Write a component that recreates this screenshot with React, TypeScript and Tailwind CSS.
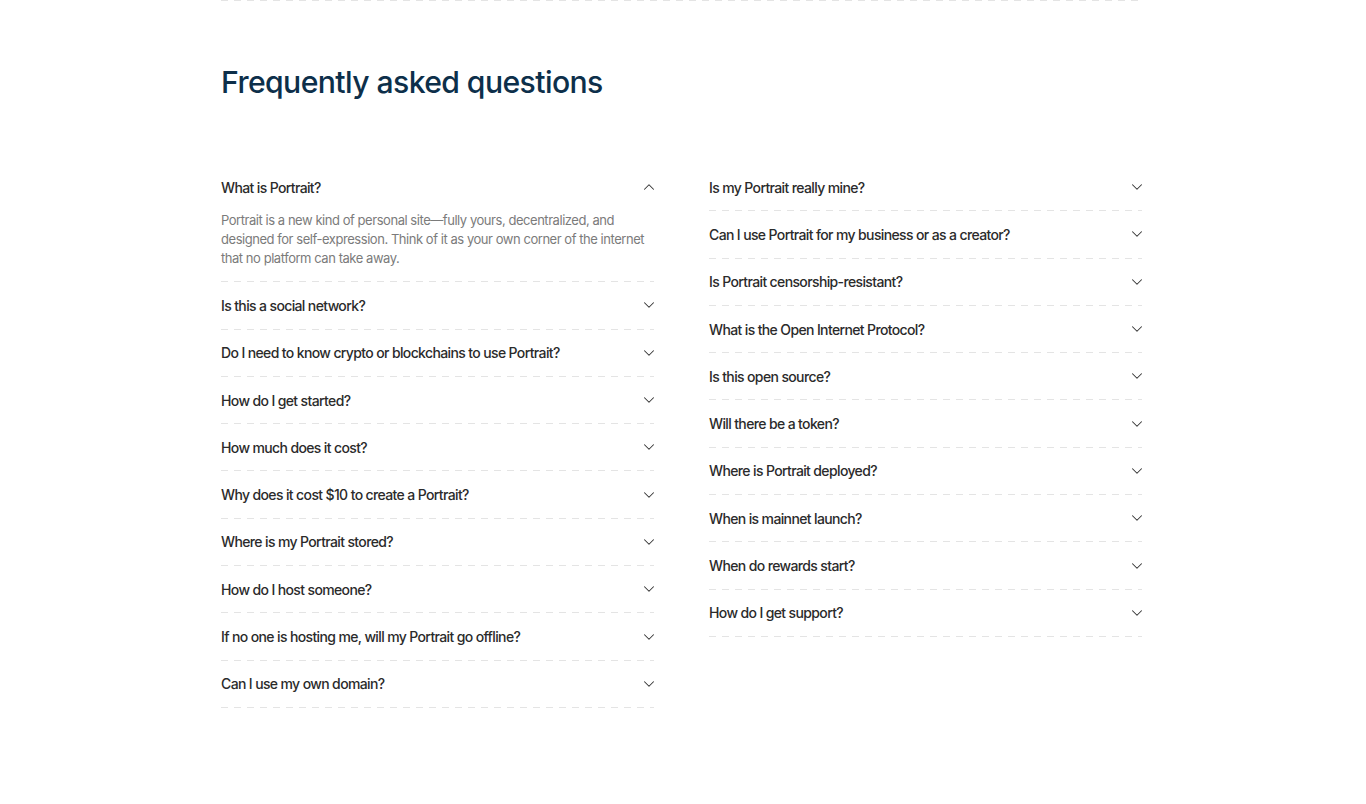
import { ChevronDown, ChevronUp } from "lucide-react";

const left = [
  "What is Portrait?",
  "Is this a social network?",
  "Do I need to know crypto or blockchains to use Portrait?",
  "How do I get started?",
  "How much does it cost?",
  "Why does it cost $10 to create a Portrait?",
  "Where is my Portrait stored?",
  "How do I host someone?",
  "If no one is hosting me, will my Portrait go offline?",
  "Can I use my own domain?",
];

const right = [
  "Is my Portrait really mine?",
  "Can I use Portrait for my business or as a creator?",
  "Is Portrait censorship-resistant?",
  "What is the Open Internet Protocol?",
  "Is this open source?",
  "Will there be a token?",
  "Where is Portrait deployed?",
  "When is mainnet launch?",
  "When do rewards start?",
  "How do I get support?",
];

function Dashes() {
  return <div className="h-px w-full bg-[repeating-linear-gradient(90deg,#e4e4e4_0_7px,transparent_7px_13px)]"></div>;
}

function Item({ q, open }: { q: string; open?: boolean }) {
  return (
    <div>
      <button className="flex h-[46.3px] w-full items-center justify-between text-left">
        <span className="text-[14px] font-medium tracking-[-0.045em] text-[#2b2b2b]">{q}</span>
        {open ? (
          <ChevronUp size={18} strokeWidth={1.4} className="mr-[-4px] text-[#333]" />
        ) : (
          <ChevronDown size={18} strokeWidth={1.4} className="mr-[-4px] text-[#333]" />
        )}
      </button>
      {open && (
        <p className="pt-[1px] pb-[13px] text-[13px] leading-[19px] tracking-[-0.035em] text-[#7b7b7b]">
          Portrait is a new kind of personal site—fully yours, decentralized, and designed for self-expression. Think of it as your own corner of the internet that no platform can take away.
        </p>
      )}
      <Dashes />
    </div>
  );
}

export default function App() {
  return (
    <div className="min-h-screen bg-white font-['Inter',sans-serif]">
      <div className="ml-[221px] w-[921px]">
        <Dashes />
        <h1 className="mt-[61px] text-[30.2px] font-medium leading-[40px] tracking-[-0.02em] text-[#0d2f4a]">
          Frequently asked questions
        </h1>
        <div className="mt-[62px] grid grid-cols-2 gap-x-[55px]">
          <div>
            {left.map((q, i) => (
              <Item key={q} q={q} open={i === 0} />
            ))}
          </div>
          <div>
            {right.map((q) => (
              <Item key={q} q={q} />
            ))}
          </div>
        </div>
      </div>
    </div>
  );
}
